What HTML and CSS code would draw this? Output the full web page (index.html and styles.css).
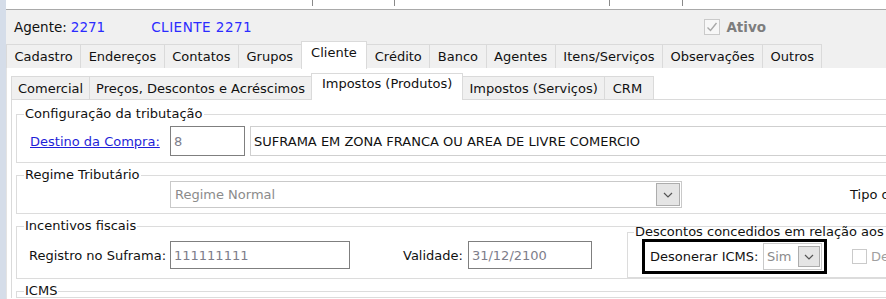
FILE: index.html
```html
<!DOCTYPE html>
<html lang="pt-BR">
<head>
  <meta charset="UTF-8">
  <title>Cliente 2271</title>
  <link rel="stylesheet" href="styles.css">
</head>
<body>
  <div class="app">
    <div class="strip"></div>

    <div class="window">
      <!-- grid header remains above the form -->
      <div class="ruler">
        <span class="cell c1"></span>
        <span class="cell c2"></span>
        <span class="cell c3"></span>
        <span class="cell c4"></span>
      </div>

      <!-- Agent / client header -->
      <div class="header">
        <span class="label">Agente:</span>
        <span class="value">2271</span>
        <span class="value client">CLIENTE 2271</span>
        <label class="active-check">
          <span class="checkbox checked">
            <svg width="14" height="14" viewBox="0 0 14 14"><path d="M2.5 7.5 L5.5 10.5 L11.5 3" fill="none" stroke="#a8a8a8" stroke-width="1.4"/></svg>
          </span>
          <span class="active-text">Ativo</span>
        </label>
      </div>

      <!-- Main tabs -->
      <div class="tabs main-tabs">
        <div class="tab">Cadastro</div>
        <div class="tab">Endereços</div>
        <div class="tab">Contatos</div>
        <div class="tab">Grupos</div>
        <div class="tab active">Cliente</div>
        <div class="tab">Crédito</div>
        <div class="tab">Banco</div>
        <div class="tab">Agentes</div>
        <div class="tab">Itens/Serviços</div>
        <div class="tab">Observações</div>
        <div class="tab">Outros</div>
      </div>

      <div class="page">
        <!-- Client sub tabs -->
        <div class="tabs sub-tabs">
          <div class="tab">Comercial</div>
          <div class="tab">Preços, Descontos e Acréscimos</div>
          <div class="tab active">Impostos (Produtos)</div>
          <div class="tab">Impostos (Serviços)</div>
          <div class="tab crm">CRM</div>
        </div>

        <div class="panel">
          <fieldset class="group">
            <legend>Configuração da tributação</legend>
            <div class="row config-row">
              <a href="#" class="field-label link">Destino da Compra:</a>
              <div class="input dark code">8</div>
              <div class="input light desc">SUFRAMA EM ZONA FRANCA OU AREA DE LIVRE COMERCIO</div>
            </div>
          </fieldset>

          <fieldset class="group">
            <legend>Regime Tributário</legend>
            <div class="row regime-row">
              <div class="select regime">
                <span class="select-text">Regime Normal</span>
                <span class="drop">
                  <svg width="10" height="6" viewBox="0 0 10 6"><path d="M1 1 L5 5 L9 1" fill="none" stroke="#555" stroke-width="1.2"/></svg>
                </span>
              </div>
              <span class="tipo">Tipo de</span>
            </div>
          </fieldset>

          <fieldset class="group">
            <legend>Incentivos fiscais</legend>
            <div class="row incentive-row">
              <div class="incentive-fields">
                <span class="field-label suframa-label">Registro no Suframa:</span>
                <div class="input dark suframa">111111111</div>
                <span class="validade-label">Validade:</span>
                <div class="input dark validade">31/12/2100</div>
              </div>

              <fieldset class="group discounts">
                <legend>Descontos concedidos em relação aos ICMS</legend>
                <div class="discount-row">
                  <div class="highlight">
                    <span class="nowrap">Desonerar ICMS:</span>
                    <div class="select small">
                      <span class="select-text">Sim</span>
                      <span class="drop">
                        <svg width="10" height="6" viewBox="0 0 10 6"><path d="M1 1 L5 5 L9 1" fill="none" stroke="#555" stroke-width="1.2"/></svg>
                      </span>
                    </div>
                  </div>
                  <span class="checkbox disabled"></span>
                  <span class="muted">Deduzir</span>
                </div>
              </fieldset>
            </div>
          </fieldset>

          <fieldset class="group">
            <legend>ICMS</legend>
            <div class="row"></div>
          </fieldset>
        </div>
      </div>
    </div>
  </div>
</body>
</html>
```

FILE: styles.css
```css
html, body {
  margin: 0;
  padding: 0;
  width: 886px;
  height: 299px;
  overflow: hidden;
}

body {
  font-family: "DejaVu Sans", sans-serif;
  font-size: 13px;
  color: #111;
  background-color: #fff;
}

.app {
  display: flex;
  height: 299px;
}

.strip {
  width: 6px;
  flex-shrink: 0;
  background-color: #d5dde9;
}

.window {
  flex: 1;
  display: flex;
  flex-direction: column;
  background-color: #f0f0f0;
  min-width: 0;
}

.window > * {
  flex-shrink: 0;
}

.nowrap {
  white-space: nowrap;
}

/* top ruler */
.ruler {
  height: 9px;
  display: flex;
  align-items: flex-start;
  background-color: #fff;
  border-bottom: 1px solid #a9a9a9;
}

.cell {
  height: 6px;
  border-right: 1px solid #8a8a8a;
}

.c1 { width: 306px; }
.c2 { width: 81px; }
.c3 { width: 214px; }
.c4 { width: 72px; }

/* header */
.header {
  height: 33px;
  display: flex;
  align-items: center;
  padding-left: 8px;
  font-size: 13.5px;
}

.header .value {
  color: #2b2bff;
  margin-left: 4px;
}

.header .client {
  margin-left: 46px;
  letter-spacing: 0.5px;
}

.active-check {
  display: flex;
  align-items: center;
  margin-left: auto;
  margin-right: 120px;
}

.checkbox {
  width: 14px;
  height: 14px;
  border: 1px solid #cacaca;
  background-color: #f7f7f7;
  display: inline-flex;
  align-items: center;
  justify-content: center;
  flex-shrink: 0;
}

.active-text {
  margin-left: 6px;
  font-weight: bold;
  color: #7d7d7d;
}

/* tabs */
.tabs {
  display: flex;
  align-items: flex-end;
}

.tab {
  height: 23px;
  padding: 0 7.5px;
  display: flex;
  align-items: center;
  background-color: #f0f0f0;
  border: 1px solid #dadada;
  border-bottom: none;
  margin-right: -1px;
  white-space: nowrap;
}

.tab.active {
  height: 28px;
  padding: 3px 9.5px 0;
  background-color: #fff;
  position: relative;
  z-index: 1;
  margin-bottom: -1px;
  align-items: flex-start;
  box-sizing: border-box;
}

.main-tabs {
  height: 25px;
}

.page {
  flex: 1;
  background-color: #fff;
  border-left: 1px solid #e3e3e3;
  padding: 4px 0 0 4px;
}

.sub-tabs {
  height: 27px;
}

.sub-tabs .tab {
  height: 22px;
  padding: 0 6px;
}

.sub-tabs .tab.active {
  height: 27px;
  padding: 2px 10px 0;
}

.sub-tabs .tab.crm {
  padding: 0 11px 0 8px;
}

.panel {
  border-top: 1px solid #dadada;
  border-left: 1px solid #dadada;
  padding: 8px 0 0 4px;
}

/* group boxes */
.group {
  margin: 0 0 6px 0;
  padding: 0;
  border: 1px solid #dcdcdc;
  border-right: none;
  min-width: 0;
}

.group legend {
  margin-left: 7px;
  padding: 0 1px;
  line-height: 12px;
  color: #111;
}

.row {
  display: flex;
  align-items: center;
}

.config-row {
  padding: 6px 0 6px 13px;
}

.field-label {
  width: 140px;
  flex-shrink: 0;
}

.link {
  color: #1f1fd8;
  text-decoration: underline;
}

.input {
  height: 28px;
  box-sizing: border-box;
  display: flex;
  align-items: center;
  padding-left: 3px;
  background-color: #fff;
  white-space: nowrap;
  flex-shrink: 0;
}

.input.dark {
  border: 1px solid #7f7f7f;
  color: #7d7d8a;
}

.input.light {
  border: 1px solid #cfcfcf;
}

.code {
  width: 75px;
  height: 30px;
}

.desc {
  width: 700px;
  height: 30px;
  margin-left: 5px;
}

/* selects */
.select {
  height: 27px;
  box-sizing: border-box;
  border: 1px solid #c9c9c9;
  display: flex;
  align-items: center;
  justify-content: space-between;
  padding: 0 1px 0 4px;
  background-color: #fff;
  flex-shrink: 0;
}

.select-text {
  color: #8b8b8b;
}

.drop {
  width: 24px;
  height: 23px;
  box-sizing: border-box;
  border: 1px solid #adadad;
  background-color: #e5e5e5;
  display: flex;
  align-items: center;
  justify-content: center;
}

.regime-row {
  padding: 0 0 5px 153px;
}

.regime {
  width: 512px;
}

.tipo {
  margin-left: 168px;
  white-space: nowrap;
}

/* incentives */
.incentive-row {
  align-items: flex-start;
  padding: 0 0 0 12px;
}

.incentive-fields {
  display: flex;
  align-items: center;
  padding-top: 9px;
}

.suframa-label {
  width: 141px;
}

.suframa {
  width: 180px;
}

.validade-label {
  margin-left: 53px;
  margin-right: 5px;
}

.validade {
  width: 124px;
}

.discounts {
  margin: -6px 0 0 35px;
  flex: 1;
}

.discounts legend {
  margin-left: 6px;
  white-space: nowrap;
}

.discount-row {
  display: flex;
  align-items: center;
  padding: 1px 0 3px 14px;
}

.highlight {
  width: 185px;
  height: 35px;
  box-sizing: border-box;
  border: 3px solid #000;
  display: flex;
  align-items: center;
  justify-content: space-between;
  padding: 0 2px 0 5px;
  flex-shrink: 0;
}

.select.small {
  width: 59px;
  height: 27px;
  padding-left: 3px;
}

.select.small .drop {
  width: 22px;
  height: 21px;
}

.checkbox.disabled {
  margin-left: 25px;
  width: 13px;
  height: 13px;
  background-color: #fff;
}

.muted {
  margin-left: 4px;
  color: #a0a0a0;
  white-space: nowrap;
}
```
